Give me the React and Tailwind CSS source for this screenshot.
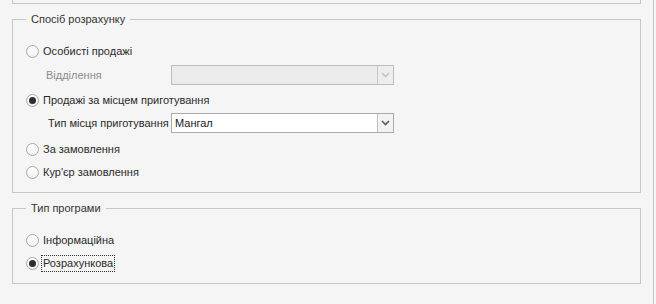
import React from "react";

function Radio({ checked, label, focus }) {
  return (
    <label className="flex items-center pl-[13px]">
      <span className="w-[13px] h-[13px] rounded-full border border-[#a7a7a7] bg-[linear-gradient(#ffffff,#f0f0f0)] flex items-center justify-center shrink-0">
        {checked && <span className="w-[7px] h-[7px] rounded-full bg-[#2e2e2e]" />}
      </span>
      <span
        className={`ml-[2px] leading-[15px] px-[1px] whitespace-nowrap ${
          focus ? "border border-dotted border-[#303030]" : "border border-transparent"
        }`}
      >
        {label}
      </span>
    </label>
  );
}

function Combo({ value, disabled }) {
  return (
    <div
      className={`flex h-[20px] w-[223px] border ${
        disabled ? "bg-[#ebebeb] border-[#bdbdbd]" : "bg-white border-[#ababab]"
      }`}
    >
      <div className="flex-1 px-[3px] leading-[18px] text-[#202020]">{value}</div>
      <div
        className={`w-[16px] flex items-center justify-center border-l ${
          disabled ? "border-[#c8c8c8] bg-[#ededed]" : "border-[#c0c0c0] bg-[#f2f2f2]"
        }`}
      >
        <svg width="9" height="6" viewBox="0 0 9 6">
          <path
            d="M1 1 L4.5 4.5 L8 1"
            fill="none"
            stroke={disabled ? "#c4c4c4" : "#5a5a5a"}
            strokeWidth="1.6"
          />
        </svg>
      </div>
    </div>
  );
}

function Group({ title, children, className }) {
  return (
    <fieldset className={`border border-[#c6c6c6] px-0 ${className}`}>
      <legend className="ml-[13px] px-[5px] leading-[14px] text-[#333333]">{title}</legend>
      {children}
    </fieldset>
  );
}

export default function App() {
  return (
    <div
      className="w-[656px] h-[304px] bg-[#f5f5f5] flex text-[11px] text-[#2a2a2a] overflow-hidden"
      style={{ fontFamily: '"Liberation Sans", Arial, sans-serif' }}
    >
      <div className="w-[641px] pl-[12px] flex flex-col">
        <div className="h-[4px] border-x border-b border-[#c6c6c6]" />

        <Group title="Спосіб розрахунку" className="mt-[8px] h-[181px]">
          <div className="flex flex-col pt-[13px]">
            <div className="h-[24px] flex items-center">
              <Radio label="Особисті продажі" />
            </div>
            <div className="h-[24px] flex items-center">
              <span className="w-[158px] pl-[33px] text-[#8c8c8c] whitespace-nowrap">Відділення</span>
              <Combo disabled value="" />
            </div>
            <div className="h-[26px] flex items-center">
              <Radio checked label="Продажі за місцем приготування" />
            </div>
            <div className="h-[20px] flex items-center">
              <span className="w-[158px] pl-[35px] whitespace-nowrap">Тип місця приготування</span>
              <Combo value="Мангал" />
            </div>
            <div className="h-[24px] mt-[4px] flex items-center">
              <Radio label="За замовлення" />
            </div>
            <div className="h-[22px] flex items-center">
              <Radio label="Кур'єр замовлення" />
            </div>
          </div>
        </Group>

        <Group title="Тип програми" className="mt-[8px] h-[83px]">
          <div className="flex flex-col pt-[14px]">
            <div className="h-[23px] flex items-center">
              <Radio label="Інформаційна" />
            </div>
            <div className="h-[23px] flex items-center">
              <Radio checked focus label="Розрахункова" />
            </div>
          </div>
        </Group>
      </div>
      <div className="ml-[12px] w-px h-full bg-[#c6c6c6]" />
    </div>
  );
}
